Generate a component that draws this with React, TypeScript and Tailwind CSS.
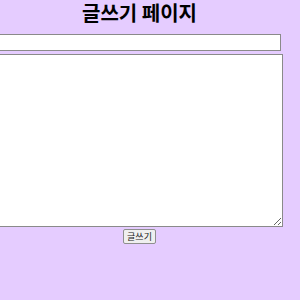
export default function App() {
  return (
    <div className="w-[300px] h-[300px] bg-[#e5ccff] overflow-hidden" style={{ fontFamily: '"Noto Sans CJK KR", "Noto Sans", sans-serif' }}>
      <div className="w-[279px] flex flex-col items-center">
        <h1 className="text-[20px] leading-[26px] font-semibold text-black h-[34px] pt-[0px]">글쓰기 페이지</h1>
        <input type="text" className="w-[282px] h-[17px] shrink-0 bg-white border border-[#8a8a8a] outline-none" />
        <textarea className="w-[286px] h-[173px] shrink-0 mt-[3px] bg-white border border-[#8a8a8a] outline-none resize" />
        <button className="mt-[2px] h-[15px] px-[3px] text-[9px] leading-[13px] bg-[#efefef] border border-[#8f8f8f] rounded-[2px] text-[#222]">글쓰기</button>
      </div>
    </div>
  );
}
